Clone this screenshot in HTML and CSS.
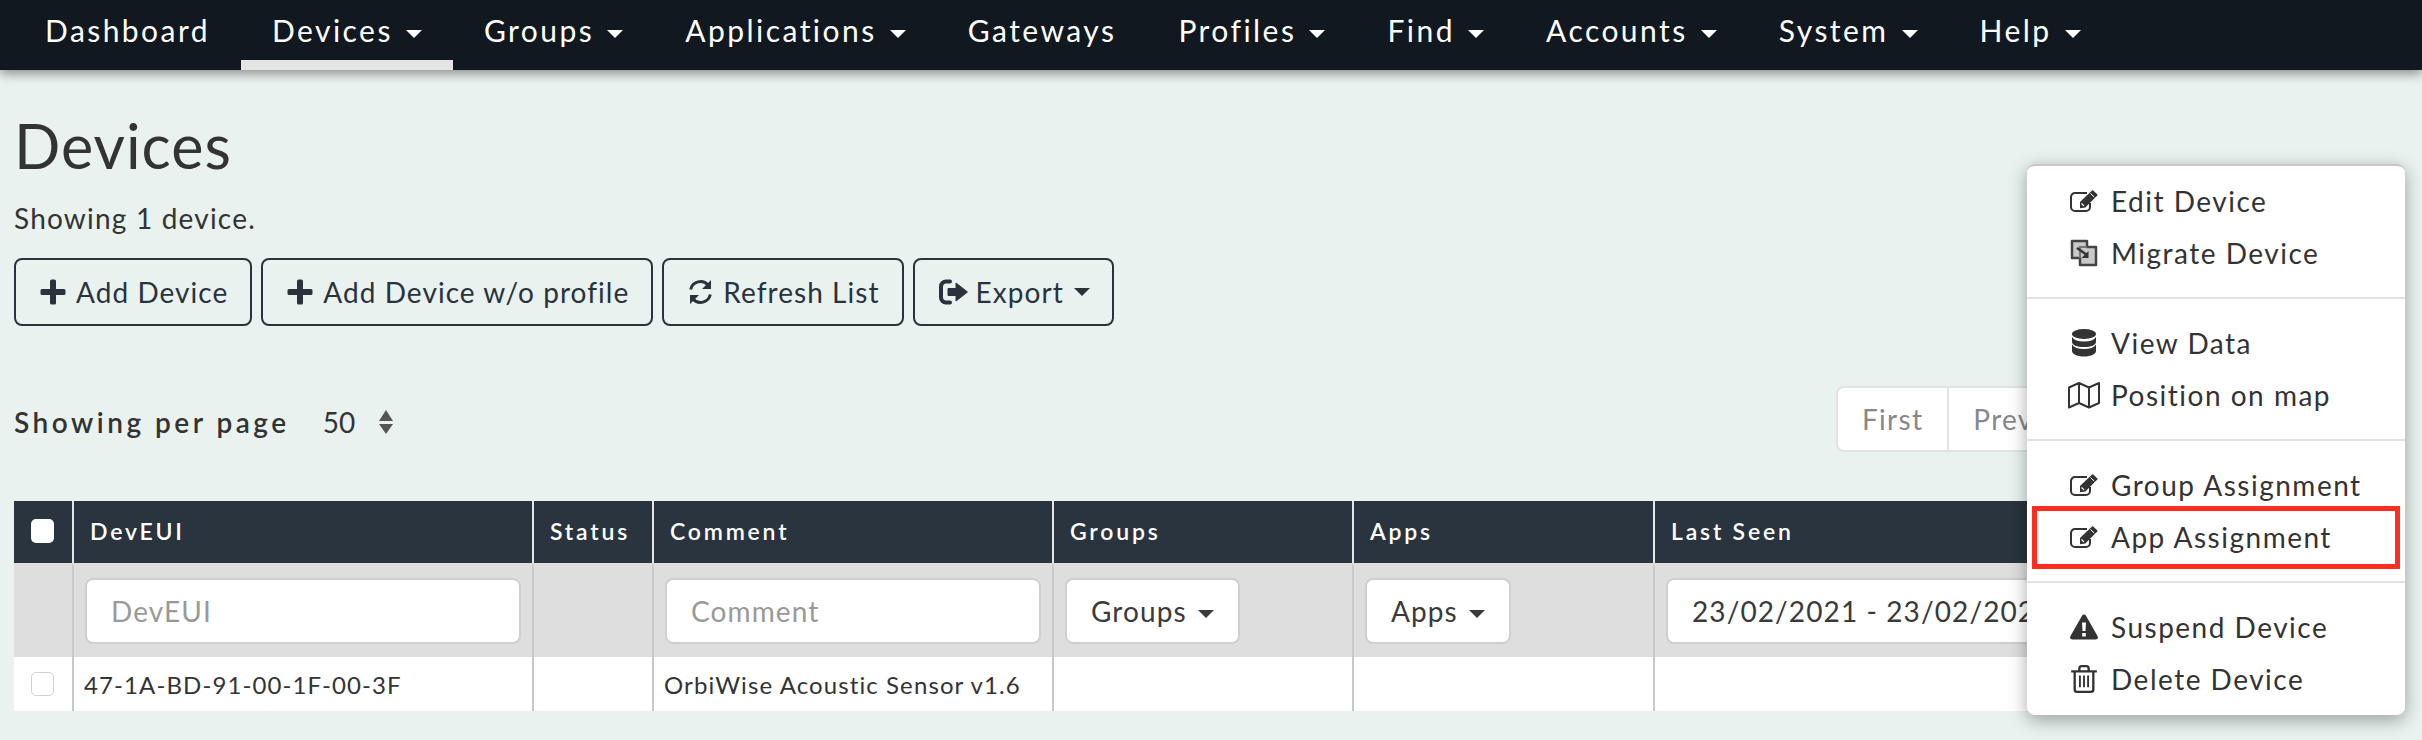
FILE: index.html
```html
<!DOCTYPE html>
<html lang="en">
  <head>
    <meta charset="UTF-8" />
    <title>Devices</title>
    <link rel="stylesheet" href="styles.css">
  </head>
  <body>
    <!-- shared icons -->
    <svg class="icon-defs" aria-hidden="true">
      <symbol id="i-edit" viewBox="0 0 28 23">
        <path d="M20 13.500v4a4 4 0 0 1-4 4H5a4 4 0 0 1-4-4V7.500a4 4 0 0 1 4-4h12" fill="none" stroke="currentColor" stroke-width="2"/>
        <path d="M10 12.500 22 1l.9-.3 4.600 4.300-.2.900-12 12-5.300 .9z" fill="currentColor"/>
        <path d="M11.500 14l2.500 2.400" stroke="#fff" stroke-width="1.200"/>
        <path d="M20.500 4l3.800 3.600" stroke="#fff" stroke-width="1"/>
      </symbol>
      <symbol id="i-migrate" viewBox="0 0 28 28">
        <path d="M2 2h15v6h9v18H10v-7H2z" fill="#c9c9c9" stroke="#444" stroke-width="2.500" stroke-linejoin="round"/>
        <path d="M10 19V8h7" fill="none" stroke="#777" stroke-width="2"/>
        <path d="M7 9l10 7" stroke="currentColor" stroke-width="2.500"/>
        <path d="M18.500 12v7h-7z" fill="currentColor"/>
      </symbol>
      <symbol id="i-data" viewBox="0 0 24 28">
        <ellipse cx="12" cy="5" rx="12" ry="5" fill="currentColor"/>
        <path d="M0 8c2 3 6 4.500 12 4.500S22 11 24 8v5c0 3-5 5-12 5S0 16 0 13zM0 15.500c2 3 6 4.500 12 4.500s10-1.500 12-4.500V22c0 3-5 5.500-12 5.500S0 25 0 22z" fill="currentColor"/>
      </symbol>
      <symbol id="i-map" viewBox="0 0 32 28">
        <path d="M1 6.500 11 2l10 4.500L31 2v20l-10 4.500L11 22 1 26.500zM11 2v20M21 6.500v20" fill="none" stroke="currentColor" stroke-width="2" stroke-linejoin="round"/>
      </symbol>
      <symbol id="i-warn" viewBox="0 0 28 25">
        <path fill-rule="evenodd" d="M14 0c.8 0 1.500.4 2 1.200l11.600 20.600c.8 1.500 0 3.200-2 3.200H2.400c-2 0-2.800-1.700-2-3.200L12 1.200C12.500.4 13.200 0 14 0zM12 8l.5 8.500h3L16 8zM12.200 18.500v3.500h3.600v-3.500z" fill="currentColor"/>
      </symbol>
      <symbol id="i-trash" viewBox="0 0 22 24">
        <path d="M0 5.500h22M7 5V3a2 2 0 0 1 2-2h4a2 2 0 0 1 2 2v2M3 6v15a2 2 0 0 0 2 2h12a2 2 0 0 0 2-2V6" fill="none" stroke="currentColor" stroke-width="2"/>
        <path d="M7.500 9v10M11 9v10M14.500 9v10" stroke="currentColor" stroke-width="1.600"/>
      </symbol>
      <symbol id="i-plus" viewBox="0 0 26 26">
        <path d="M10 2a1.500 1.500 0 0 1 1.500-1.500h3A1.500 1.500 0 0 1 16 2v8h8a1.500 1.500 0 0 1 1.500 1.500v3A1.500 1.500 0 0 1 24 16h-8v8a1.500 1.500 0 0 1-1.500 1.500h-3A1.500 1.500 0 0 1 10 24v-8H2a1.500 1.500 0 0 1-1.500-1.500v-3A1.500 1.500 0 0 1 2 10h8z" fill="currentColor"/>
      </symbol>
      <symbol id="i-refresh" viewBox="0 0 24 26">
        <path d="M2.200 10.500A10 10 0 0 1 19.500 6" fill="none" stroke="currentColor" stroke-width="3"/>
        <path d="M22.500 1v9h-9zM1.500 25v-9h9z" fill="currentColor"/>
        <path d="M21.800 15.500A10 10 0 0 1 4.500 20" fill="none" stroke="currentColor" stroke-width="3"/>
      </symbol>
      <symbol id="i-export" viewBox="0 0 30 26">
        <path d="M11 2.500H7A5 5 0 0 0 2 7.500v11a5 5 0 0 0 5 5h4" fill="none" stroke="currentColor" stroke-width="4" stroke-linecap="round"/>
        <path d="M9 9.500h8V4l11.500 9L17 22v-5.500H9z" fill="currentColor" stroke="currentColor" stroke-linejoin="round"/>
      </symbol>
    </svg>

    <nav class="topnav">
      <a class="nav-item">Dashboard</a>
      <a class="nav-item active">Devices <span class="caret"></span></a>
      <a class="nav-item">Groups <span class="caret"></span></a>
      <a class="nav-item">Applications <span class="caret"></span></a>
      <a class="nav-item">Gateways</a>
      <a class="nav-item">Profiles <span class="caret"></span></a>
      <a class="nav-item">Find <span class="caret"></span></a>
      <a class="nav-item">Accounts <span class="caret"></span></a>
      <a class="nav-item">System <span class="caret"></span></a>
      <a class="nav-item">Help <span class="caret"></span></a>
    </nav>

    <main class="page">
      <h1>Devices</h1>
      <p class="count">Showing 1 device.</p>

      <div class="actions">
        <button class="btn"><svg class="ico ico-plus"><use href="#i-plus"/></svg>Add Device</button>
        <button class="btn"><svg class="ico ico-plus"><use href="#i-plus"/></svg>Add Device w/o profile</button>
        <button class="btn"><svg class="ico ico-refresh"><use href="#i-refresh"/></svg>Refresh List</button>
        <button class="btn"><svg class="ico ico-export"><use href="#i-export"/></svg>Export <span class="caret"></span></button>
      </div>

      <div class="pager-row">
        <div class="per-page">
          <span class="per-label">Showing per page</span>
          <span class="per-value">50</span>
          <span class="sorter"><i class="up"></i><i class="down"></i></span>
        </div>
        <div class="pager">
          <a>First</a><a class="prev">Prev</a>
        </div>
      </div>

      <table class="devices">
        <colgroup>
          <col class="c-check"><col class="c-eui"><col class="c-status"><col class="c-comment">
          <col class="c-groups"><col class="c-apps"><col>
        </colgroup>
        <thead>
          <tr class="head">
            <th><span class="box box-head"></span></th>
            <th>DevEUI</th>
            <th>Status</th>
            <th>Comment</th>
            <th>Groups</th>
            <th>Apps</th>
            <th>Last Seen</th>
          </tr>
          <tr class="filters">
            <td></td>
            <td><input placeholder="DevEUI"></td>
            <td></td>
            <td><input placeholder="Comment"></td>
            <td><button class="pick">Groups <span class="caret"></span></button></td>
            <td><button class="pick">Apps <span class="caret"></span></button></td>
            <td><input value="23/02/2021 - 23/02/2021"></td>
          </tr>
        </thead>
        <tbody>
          <tr>
            <td><span class="box"></span></td>
            <td>47-1A-BD-91-00-1F-00-3F</td>
            <td></td>
            <td>OrbiWise Acoustic Sensor v1.6</td>
            <td></td>
            <td></td>
            <td></td>
          </tr>
        </tbody>
      </table>
    </main>

    <!-- row action menu -->
    <ul class="menu">
      <li><svg class="mi"><use href="#i-edit"/></svg>Edit Device</li>
      <li><svg class="mi"><use href="#i-migrate"/></svg>Migrate Device</li>
      <li class="sep"></li>
      <li><svg class="mi"><use href="#i-data"/></svg>View Data</li>
      <li><svg class="mi mi-map"><use href="#i-map"/></svg>Position on map</li>
      <li class="sep"></li>
      <li><svg class="mi"><use href="#i-edit"/></svg>Group Assignment</li>
      <li class="marked"><svg class="mi"><use href="#i-edit"/></svg>App Assignment</li>
      <li class="sep"></li>
      <li><svg class="mi"><use href="#i-warn"/></svg>Suspend Device</li>
      <li><svg class="mi"><use href="#i-trash"/></svg>Delete Device</li>
    </ul>
  </body>
</html>
```

FILE: styles.css
```css
* {
  box-sizing: border-box;
}
body {
  margin: 0;
  height: 740px;
  overflow: hidden;
  position: relative;
  background-color: #e9f2ef;
  color: #333;
  font-family: "Lato", "Open Sans", sans-serif;
}
.icon-defs {
  display: none;
}

/* top bar */
.topnav {
  display: flex;
  height: 70px;
  padding-left: 14px;
  background-color: #111820;
  box-shadow: 0 4px 10px rgba(0, 0, 0, 0.4);
}
.nav-item {
  height: 70px;
  padding: 12px 31px 0;
  color: #fff;
  font-size: 30px;
  letter-spacing: 2.45px;
  white-space: nowrap;
}
.nav-item.active {
  border-bottom: 10px solid #e4e4e4;
}
.caret {
  display: inline-block;
  margin-left: 3px;
  vertical-align: middle;
  border-top: 8px solid currentColor;
  border-left: 8px solid transparent;
  border-right: 8px solid transparent;
}

/* page */
.page {
  padding: 0 17px 0 14px;
}
h1 {
  margin: 43px 0 0;
  font-size: 61px;
  font-weight: 400;
  line-height: 66px;
  letter-spacing: 1px;
}
.count {
  margin: 22px 0 0;
  font-size: 28px;
  line-height: 34px;
  letter-spacing: 1.2px;
}
.actions {
  display: flex;
  gap: 9px;
  margin-top: 23px;
}
.btn {
  display: flex;
  align-items: center;
  height: 68px;
  padding: 0 22px 0 24px;
  border: 2px solid #2a333c;
  border-radius: 8px;
  background: transparent;
  color: #2a333c;
  font: 400 28px "Lato", sans-serif;
  letter-spacing: 1.05px;
}
.btn .caret {
  margin-left: 10px;
}
.ico {
  margin-right: 10px;
}
.ico-plus {
  width: 26px;
  height: 26px;
}
.ico-refresh {
  width: 25px;
  height: 26px;
}
.ico-export {
  width: 30px;
  height: 26px;
  margin-right: 7px;
}

/* page size and pager */
.pager-row {
  display: flex;
  justify-content: space-between;
  align-items: flex-end;
  height: 126px;
}
.per-page {
  display: flex;
  align-items: center;
  height: 68px;
  padding-top: 8px;
}
.per-label {
  font-size: 28px;
  font-weight: 600;
  letter-spacing: 3.5px;
}
.per-value {
  margin-left: 33px;
  font-size: 28px;
}
.sorter {
  display: flex;
  flex-direction: column;
  gap: 3px;
  margin-left: 24px;
}
.sorter i {
  border-left: 7px solid transparent;
  border-right: 7px solid transparent;
}
.sorter .up {
  border-bottom: 11px solid #555;
}
.sorter .down {
  border-top: 10px solid #555;
}
.pager {
  display: flex;
  width: 569px;
  height: 66px;
  border: 2px solid #e0e4e3;
  border-radius: 8px;
  background-color: #fff;
}
.pager a {
  display: flex;
  align-items: center;
  padding: 0 24px;
  color: #888;
  font-size: 28px;
  letter-spacing: 1.3px;
}
.pager .prev {
  flex: 1;
  border-left: 2px solid #e0e4e3;
}

/* table */
.devices {
  width: 100%;
  margin-top: 49px;
  border-collapse: separate;
  border-spacing: 0;
  table-layout: fixed;
  font-size: 24px;
}
.c-check { width: 58px; }
.c-eui { width: 460px; }
.c-status { width: 120px; }
.c-comment { width: 400px; }
.c-groups { width: 300px; }
.c-apps { width: 301px; }
.devices th,
.devices td {
  padding: 0 10px;
  border-left: 2px solid #c6c9c9;
  text-align: left;
  white-space: nowrap;
  overflow: hidden;
}
.devices th:first-child,
.devices td:first-child {
  border-left: 0;
}
.head th {
  height: 62px;
  padding: 0 10px 2px 16px;
  border-left-color: #e2e6e6;
  background-color: #29343e;
  color: #fff;
  font-size: 23px;
  font-weight: 600;
  letter-spacing: 2.8px;
}
.filters td {
  height: 94px;
  padding: 0 11px 3px;
  border-top: 4px solid #dedede;
  background-color: #dedede;
}
.devices tbody td {
  height: 54px;
  background-color: #fff;
  letter-spacing: 1.1px;
}
.box {
  display: block;
  width: 23px;
  height: 24px;
  margin-left: 7px;
  border: 1px solid #cfcfcf;
  border-radius: 5px;
  background-color: #fff;
}
.head .box-head {
  margin-left: 1px;
  border: 0;
}
.filters input,
.pick {
  height: 66px;
  border: 2px solid #cfcfcf;
  border-radius: 8px;
  background-color: #fff;
  color: #3a3a3a;
  font: 400 28px "Lato", sans-serif;
  letter-spacing: 1.1px;
}
.filters input {
  display: block;
  width: 100%;
  padding: 0 24px;
}
.filters input::placeholder {
  color: #999;
}
.pick {
  display: block;
  padding: 0 24px;
}

/* floating menu */
.menu {
  position: absolute;
  top: 164px;
  left: 2027px;
  width: 378px;
  height: 551px;
  margin: 0;
  padding: 10px 0 0;
  list-style: none;
  border-top: 2px solid #c4c9c7;
  border-radius: 8px;
  background-color: #fff;
  box-shadow: 0 5px 18px rgba(0, 0, 0, 0.35);
  font-size: 28px;
  letter-spacing: 1.5px;
}
.menu li {
  position: relative;
  display: flex;
  align-items: center;
  height: 52px;
  padding: 0 0 2px 43px;
}
.menu li.sep {
  height: 2px;
  margin: 17px 0 19px;
  padding: 0;
  background-color: #e3e3e3;
}
.mi {
  width: 28px;
  height: 28px;
  margin-right: 13px;
  flex-shrink: 0;
}
.mi-map {
  width: 32px;
  margin: 0 11px 0 -2px;
}
.marked::after {
  content: "";
  position: absolute;
  top: -6px;
  bottom: -5px;
  left: 5px;
  right: 5px;
  border: 5px solid #ff2d20;
}
```
